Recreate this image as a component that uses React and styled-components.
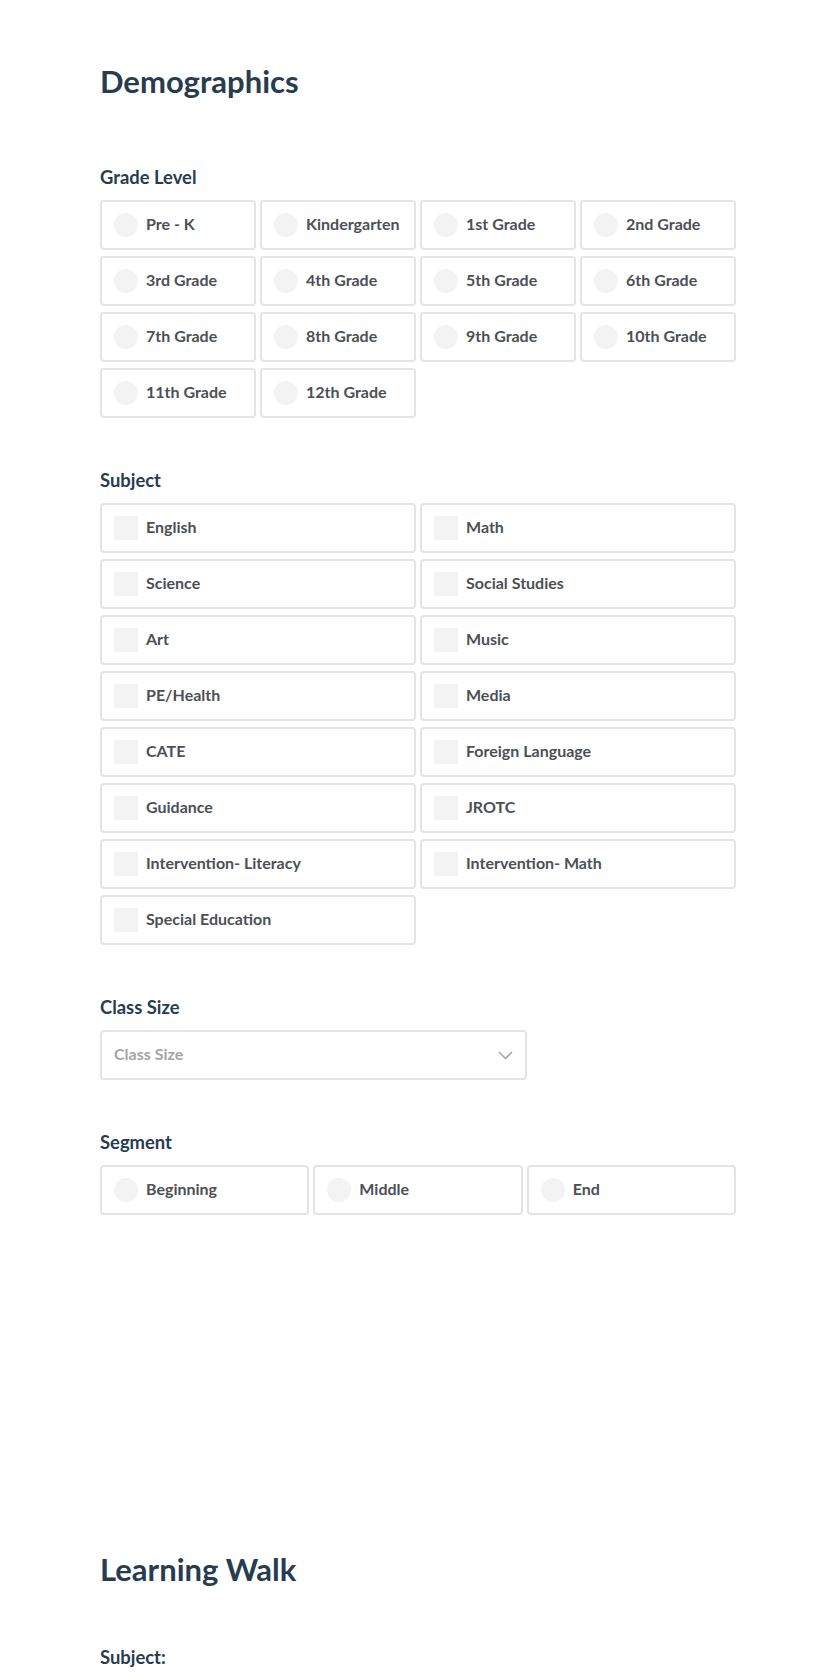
import styled, { createGlobalStyle } from 'styled-components';

const GlobalStyle = createGlobalStyle`
  body {
    margin: 0;
    background: #ffffff;
    font-family: Lato, "Open Sans", sans-serif;
  }
`;

const Page = styled.div`
  padding: 63px 0 0 100px;
  width: 636px;
`;

const Section = styled.section`
  display: flex;
  flex-direction: column;
  margin-bottom: ${props => props.$spaceAfter || 0}px;
`;

const Title = styled.h1`
  margin: 0 0 ${props => props.$gap || 67}px;
  font-size: 31px;
  line-height: 36px;
  font-weight: 700;
  color: #283c50;
`;

const Field = styled.div`
  display: flex;
  flex-direction: column;
  margin-bottom: 52px;
  &:last-child {
    margin-bottom: 0;
  }
`;

const Label = styled.div`
  font-size: 18.4px;
  line-height: 20px;
  font-weight: 700;
  color: #283c50;
  margin-bottom: 13px;
`;

const OptionGrid = styled.div`
  display: grid;
  grid-template-columns: repeat(${props => props.$cols}, 1fr);
  column-gap: 4px;
  row-gap: 6px;
`;

const Option = styled.label`
  box-sizing: border-box;
  height: 50px;
  display: flex;
  align-items: center;
  gap: 8px;
  padding: 0 12px;
  border: 2px solid #e4e4e4;
  border-radius: 4px;
  background: #fff;
  cursor: pointer;
`;

const Marker = styled.span`
  flex: none;
  width: 24px;
  height: 24px;
  background: #f3f3f3;
  border-radius: ${props => (props.$round ? '50%' : '1px')};
`;

const OptionText = styled.span`
  font-size: 16px;
  line-height: 20px;
  padding-bottom: 2px;
  font-weight: 700;
  color: #4c5056;
  white-space: nowrap;
`;

const Select = styled.div`
  box-sizing: border-box;
  width: 427px;
  height: 50px;
  display: flex;
  align-items: center;
  justify-content: space-between;
  padding: 0 12px;
  border: 2px solid #e4e4e4;
  border-radius: 4px;
  cursor: pointer;
`;

const Placeholder = styled.span`
  font-size: 16px;
  line-height: 20px;
  padding-bottom: 2px;
  font-weight: 700;
  color: #a3a4aa;
`;

const Chevron = () => (
  <svg width="15" height="9" viewBox="0 0 15 9" fill="none">
    <polyline points="1,1 7.5,7.5 14,1" stroke="#a8a9ad" strokeWidth="1.6" />
  </svg>
);

const grades = [
  'Pre - K', 'Kindergarten', '1st Grade', '2nd Grade',
  '3rd Grade', '4th Grade', '5th Grade', '6th Grade',
  '7th Grade', '8th Grade', '9th Grade', '10th Grade',
  '11th Grade', '12th Grade',
];

const subjects = [
  'English', 'Math', 'Science', 'Social Studies', 'Art', 'Music',
  'PE/Health', 'Media', 'CATE', 'Foreign Language', 'Guidance', 'JROTC',
  'Intervention- Literacy', 'Intervention- Math', 'Special Education',
];

const segments = ['Beginning', 'Middle', 'End'];

const OptionList = ({ items, cols, round }) => (
  <OptionGrid $cols={cols}>
    {items.map(item => (
      <Option key={item}>
        <Marker $round={round} />
        <OptionText>{item}</OptionText>
      </Option>
    ))}
  </OptionGrid>
);

const App = () => (
  <>
    <GlobalStyle />
    <Page>
      <Section $spaceAfter={336}>
        <Title $gap={68}>Demographics</Title>
        <Field>
          <Label>Grade Level</Label>
          <OptionList items={grades} cols={4} round />
        </Field>
        <Field>
          <Label>Subject</Label>
          <OptionList items={subjects} cols={2} />
        </Field>
        <Field>
          <Label>Class Size</Label>
          <Select>
            <Placeholder>Class Size</Placeholder>
            <Chevron />
          </Select>
        </Field>
        <Field>
          <Label>Segment</Label>
          <OptionList items={segments} cols={3} round />
        </Field>
      </Section>
      <Section>
        <Title $gap={60}>Learning Walk</Title>
        <Field>
          <Label>Subject:</Label>
        </Field>
      </Section>
    </Page>
  </>
);

export default App;
